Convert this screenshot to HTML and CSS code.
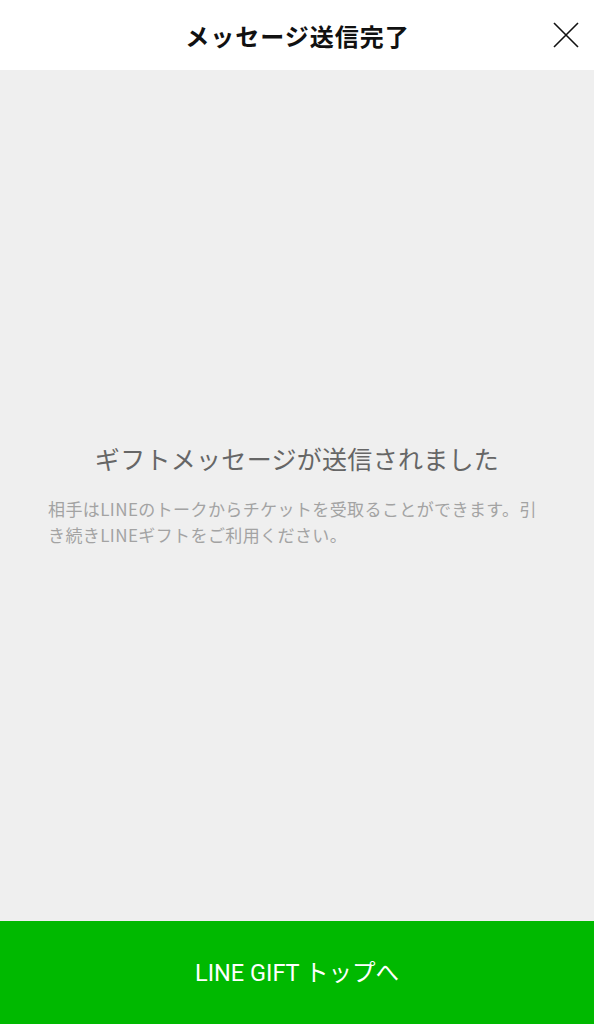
FILE: index.html
```html
<!DOCTYPE html>
<html lang="ja">
<head>
<meta charset="utf-8">
<title>メッセージ送信完了</title>
<link rel="stylesheet" href="styles.css">
</head>
<body>
<div class="page">
  <header class="header">
    <h1 class="title">メッセージ送信完了</h1>
    <button class="close" aria-label="閉じる">
      <svg width="26" height="26" viewBox="0 0 26 26"><path d="M1 1L25 25M25 1L1 25" stroke="#111" stroke-width="1.6" fill="none"/></svg>
    </button>
  </header>
  <main class="main">
    <h2 class="heading">ギフトメッセージが送信されました</h2>
    <p class="desc">相手はLINEのトークからチケットを受取ることができます。引き続きLINEギフトをご利用ください。</p>
  </main>
  <footer class="footer">
    <a class="top-btn" href="#">LINE GIFT トップへ</a>
  </footer>
</div>
</body>
</html>
```
FILE: styles.css
```css
* { box-sizing: border-box; }
html, body { margin: 0; padding: 0; }
body {
  font-family: "Noto Sans CJK JP", "Noto Sans", sans-serif;
  background: #fff;
}
.page {
  width: 594px;
  height: 1024px;
  display: flex;
  flex-direction: column;
}
.header {
  height: 70px;
  flex: none;
  position: relative;
  display: flex;
  align-items: center;
  justify-content: center;
  background: #fff;
}
.title {
  margin: 0;
  font-size: 24px;
  font-weight: 700;
  color: #111;
  letter-spacing: 1px;
  padding-left: 1px;
}
.close {
  position: absolute;
  right: 15px;
  top: 22px;
  padding: 0;
  border: 0;
  background: none;
  width: 26px;
  height: 26px;
}
.close svg { display: block; }
.main {
  flex: 1;
  background: #efefef;
  display: flex;
  flex-direction: column;
  justify-content: center;
  padding: 0 48px;
}
.heading {
  margin: 0 0 20px;
  text-align: center;
  font-size: 25px;
  font-weight: 400;
  color: #666;
  line-height: 36px;
  letter-spacing: 0.3px;
}
.desc {
  margin: 0 0 4px;
  font-size: 17px;
  line-height: 26px;
  color: #a3a3a3;
  letter-spacing: 0.4px;
}
.footer {
  height: 103px;
  flex: none;
  background: #00b900;
  display: flex;
}
.top-btn {
  flex: 1;
  display: flex;
  align-items: center;
  justify-content: center;
  color: #fff;
  text-decoration: none;
  font-family: Roboto, "Noto Sans CJK JP", sans-serif;
  font-size: 23.5px;
  padding-bottom: 4px;
}
```
